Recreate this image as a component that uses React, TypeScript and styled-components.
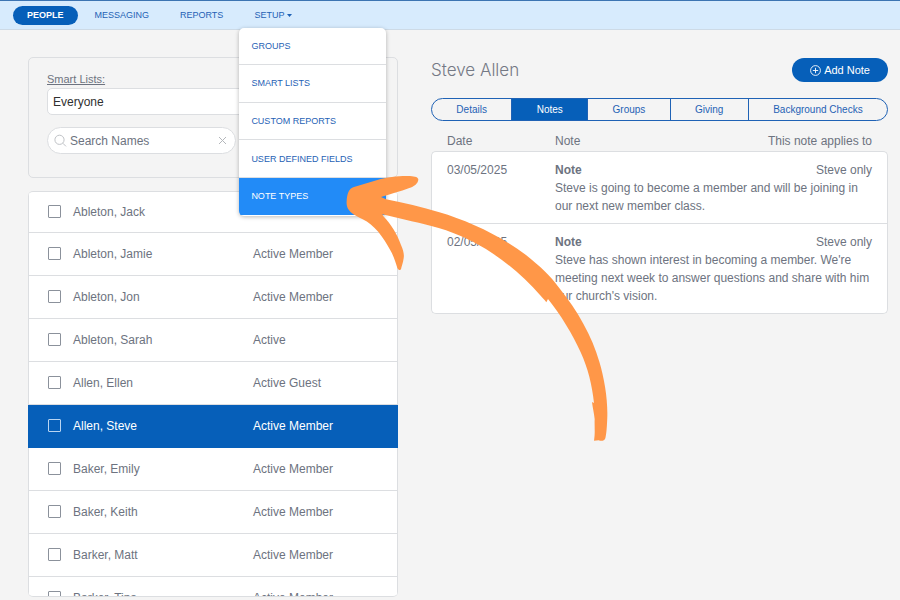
import React from "react";
import styled, { createGlobalStyle, css } from "styled-components";

const color = {
  blue: "#065fb9",
  link: "#1f62b5",
  highlight: "#228bf7",
  text: "#6d7380",
  line: "#dcdee1",
  page: "#f4f4f4",
  orange: "#ff9748",
};

const GlobalStyle = createGlobalStyle`
  *, *::before, *::after { box-sizing: border-box; }
  body {
    margin: 0;
    background: ${color.page};
    color: ${color.text};
    font-family: "Liberation Sans", Arial, sans-serif;
    font-size: 12px;
    line-height: 18px;
  }
  button, input, select { font: inherit; }
`;

const Page = styled.div`
  position: relative;
  display: flex;
  flex-direction: column;
  height: 100vh;
  overflow: hidden;
`;

const TopBar = styled.header`
  flex: none;
  background: #d7ebfd;
  border-top: 1px solid #3c74b2;
  border-bottom: 1px solid #cddae6;
`;

const Nav = styled.nav`
  display: flex;
  align-items: center;
  gap: 3px;
  height: 28px;
  padding-left: 13px;
  font-size: 9px;
`;

const navItem = css`
  display: flex;
  align-items: center;
  gap: 3px;
  height: 19px;
  padding: 0 14px;
  border: 0;
  border-radius: 10px;
  background: none;
  color: ${color.link};
  text-decoration: none;
  cursor: pointer;
`;

const NavLink = styled.a<{ $active?: boolean }>`
  ${navItem}
  ${(p) => p.$active && css`
    background: ${color.blue};
    color: #fff;
    font-weight: bold;
  `}
`;

const NavButton = styled.button`
  ${navItem}
`;

const MenuAnchor = styled.div`
  position: relative;
`;

const Menu = styled.div`
  position: absolute;
  z-index: 2;
  top: 22px;
  left: -1px;
  display: flex;
  flex-direction: column;
  width: 147px;
  height: 188px;
  overflow: hidden;
  border-radius: 5px;
  background: #fff;
  box-shadow: 0 1px 4px rgba(0, 0, 0, 0.28);
`;

const MenuItem = styled.a<{ $active?: boolean }>`
  display: flex;
  flex: 1;
  align-items: center;
  padding: 0 12px;
  border-bottom: 1px solid ${color.line};
  color: ${color.link};
  text-decoration: none;

  ${(p) => p.$active && css`
    border-color: ${color.highlight};
    background: ${color.highlight};
    color: #fff;
  `}
`;

const Content = styled.main`
  display: grid;
  flex: 1;
  grid-template-columns: 370fr 457fr;
  gap: 33px;
  min-height: 0;
  padding: 27px 12px 3px 28px;
`;

const People = styled.section`
  display: flex;
  flex-direction: column;
  gap: 13px;
  min-width: 0;
  min-height: 0;
`;

const Filters = styled.div`
  display: flex;
  flex: none;
  flex-direction: column;
  padding: 12px 18px 23px;
  border: 1px solid ${color.line};
  border-radius: 5px;
`;

const FilterLabel = styled.label`
  font-size: 11px;
  text-decoration: underline;
`;

const ListSelect = styled.select`
  height: 27px;
  padding: 0 5px;
  border: 1px solid ${color.line};
  border-radius: 5px;
  background: #fff;
  color: #303030;
  appearance: none;
`;

const SearchBox = styled.div`
  display: flex;
  align-items: center;
  gap: 3px;
  width: 57%;
  height: 27px;
  margin-top: 12px;
  padding: 0 8px 0 6px;
  border: 1px solid ${color.line};
  border-radius: 14px;
  background: #fff;
`;

const SearchInput = styled.input`
  flex: 1;
  min-width: 0;
  padding: 0;
  border: 0;
  outline: 0;
  background: none;

  &::placeholder { color: ${color.text}; opacity: 1; }
`;

const ClearButton = styled.button`
  display: flex;
  padding: 0;
  border: 0;
  background: none;
  cursor: pointer;
`;

const ListFrame = styled.div`
  flex: 1;
  min-height: 0;
  overflow: hidden;
  border-top: 1px solid ${color.line};
  border-bottom: 1px solid ${color.line};
  border-radius: 5px;
  background: #fff;
`;

const PeopleTable = styled.table`
  width: 100%;
  table-layout: fixed;
  border-spacing: 0;
`;

const PersonRow = styled.tr<{ $selected?: boolean }>`
  td {
    height: 43px;
    padding: 0;
    border-bottom: 1px solid ${color.line};
  }
  &:first-child td { height: 41px; }
  td:first-child { border-left: 1px solid ${color.line}; }
  td:last-child { border-right: 1px solid ${color.line}; }
  ${(p) => p.$selected && css`
    background: ${color.blue};
    color: #fff;
    && td { border-color: ${color.blue}; }
  `}
`;

const CheckCol = styled.col`
  width: 45px;
`;

const StatusCol = styled.col`
  width: 145px;
`;

const Check = styled.input`
  display: block;
  width: 13px;
  height: 13px;
  margin: 0 0 2px 19px;
  border: 1px solid #8b919b;
  border-radius: 1px;
  appearance: none;

  ${PersonRow}[aria-selected="true"] & { border-color: #b9d5f2; }
`;

const Detail = styled.section`
  min-width: 0;
  padding-top: 1px;
`;

const DetailHead = styled.div`
  display: flex;
  align-items: center;
  justify-content: space-between;
`;

const PersonName = styled.h1`
  margin: 0;
  font-family: Inter, "Liberation Sans", sans-serif;
  font-size: 17px;
  font-weight: 300;
  line-height: 24px;
  color: #747985;
`;

const AddButton = styled.button`
  display: flex;
  align-items: center;
  gap: 3px;
  height: 24px;
  padding: 0 18px;
  border: 0;
  border-radius: 12px;
  background: ${color.blue};
  color: #fff;
  font-size: 11px;
  cursor: pointer;
`;

const Tabs = styled.div`
  display: flex;
  height: 23px;
  margin-top: 16px;
  overflow: hidden;
  border: 1px solid ${color.link};
  border-radius: 12px;
`;

const Tab = styled.button<{ $active?: boolean }>`
  flex: 1 1 auto;
  padding: 0 24px;
  border: 0;
  border-left: 1px solid ${color.link};
  background: ${(p) => (p.$active ? color.blue : "none")};
  color: ${(p) => (p.$active ? "#fff" : color.link)};
  font-size: 10px;
  line-height: 12px;
  cursor: pointer;

  &:first-child { border-left: 0; }
`;

const NotesTable = styled.table`
  width: 100%;
  border-spacing: 0;

  th {
    padding: 11px 0 1px;
    font-weight: normal;
    text-align: left;
  }
  th:first-child { width: 124px; padding-left: 16px; }
  th:last-child { padding-right: 16px; text-align: right; }
`;

const NoteCell = styled.td`
  padding: 9px 0 0;
  background: #fff;
  vertical-align: top;
`;

const DateCell = styled(NoteCell)`
  padding-left: 15px;
  border-left: 1px solid ${color.line};
  border-bottom: 1px solid ${color.line};
`;

const TitleCell = styled(NoteCell)`
  font-weight: bold;
`;

const AppliesCell = styled(NoteCell)`
  padding-right: 15px;
  border-right: 1px solid ${color.line};
  text-align: right;
`;

const BodyCell = styled(NoteCell)`
  padding: 0 15px 8px 0;
  border-right: 1px solid ${color.line};
  border-bottom: 1px solid ${color.line};
`;

const NoteGroup = styled.tbody`
  &:nth-child(2) tr:first-child td { border-top: 1px solid ${color.line}; }
  &:nth-child(2) ${DateCell} { border-top-left-radius: 5px; }
  &:nth-child(2) ${AppliesCell} { border-top-right-radius: 5px; }
  &:last-child ${DateCell} { border-bottom-left-radius: 5px; }
  &:last-child ${BodyCell} { border-bottom-right-radius: 5px; }
`;

const ArrowDrawing = styled.svg`
  position: absolute;
  z-index: 3;
  top: 165px;
  left: 330px;
  width: 290px;
  height: 290px;
  pointer-events: none;
`;

const menuItems = ["GROUPS", "SMART LISTS", "CUSTOM REPORTS", "USER DEFINED FIELDS", "NOTE TYPES"];

const people = [
  ["Ableton, Jack", "Active Member"],
  ["Ableton, Jamie", "Active Member"],
  ["Ableton, Jon", "Active Member"],
  ["Ableton, Sarah", "Active"],
  ["Allen, Ellen", "Active Guest"],
  ["Allen, Steve", "Active Member"],
  ["Baker, Emily", "Active Member"],
  ["Baker, Keith", "Active Member"],
  ["Barker, Matt", "Active Member"],
  ["Barker, Tina", "Active Member"],
];

const tabs = ["Details", "Notes", "Groups", "Giving", "Background Checks"];

const notes = [
  {
    date: "03/05/2025",
    body: "Steve is going to become a member and will be joining in our next new member class.",
  },
  {
    date: "02/05/2025",
    body: "Steve has shown interest in becoming a member. We're meeting next week to answer questions and share with him our church's vision.",
  },
];

function Arrow() {
  return (
    <ArrowDrawing viewBox="0 0 870 870" aria-hidden="true">
      <path
        fill={color.orange}
        d="M50 108 C51 88 56 70 72 66 L152 42 C182 34 212 33 240 33 C256 34 265 37 265 44 C263 57 252 64 238 69 C210 79 184 87 153 96 L168 103 C220 113 276 126 328 142 C410 166 512 212 588 270 C628 302 661 332 686 367 C745 440 786 515 808 590 C823 640 833 700 832 752 C831 785 829 808 826 820 C823 828 814 829 806 826 L792 827 C796 803 793 785 794 762 C792 744 788 728 786 711 L792 714 C786 660 774 610 752 562 C728 508 691 448 654 402 L649 412 C643 402 637 399 632 392 C586 340 540 300 486 264 C438 232 386 207 326 189 C276 175 216 163 157 148 L160 154 C183 178 202 208 213 240 C220 256 223 268 221 280 C219 295 214 306 213 313 C210 317 205 315 202 309 C196 289 190 271 181 256 C161 218 132 178 98 163 C77 153 62 144 55 133 C51 126 49 118 50 108 Z"
      />
    </ArrowDrawing>
  );
}

export default function App() {
  return (
    <Page>
      <GlobalStyle />
      <TopBar>
        <Nav>
          <NavLink href="#people" $active>PEOPLE</NavLink>
          <NavLink href="#messaging">MESSAGING</NavLink>
          <NavLink href="#reports">REPORTS</NavLink>
          <MenuAnchor>
            <NavButton type="button" aria-expanded="true">
              SETUP
              <svg width="5" height="3" viewBox="0 0 5 3" aria-hidden="true">
                <path d="M0 0h5L2.5 3z" fill={color.link} />
              </svg>
            </NavButton>
            <Menu>
              {menuItems.map((item) => (
                <MenuItem key={item} href="#setup" $active={item === "NOTE TYPES"}>{item}</MenuItem>
              ))}
            </Menu>
          </MenuAnchor>
        </Nav>
      </TopBar>

      <Content>
        <People>
          <Filters>
            <FilterLabel htmlFor="smart-list">Smart Lists:</FilterLabel>
            <ListSelect id="smart-list">
              <option>Everyone</option>
            </ListSelect>
            <SearchBox>
              <svg width="13" height="13" viewBox="0 0 13 13" fill="none" stroke="#bfc2c6" aria-hidden="true">
                <circle cx="5.5" cy="5.8" r="4.6" />
                <path d="M8.8 9.2 12 12.4" />
              </svg>
              <SearchInput type="text" placeholder="Search Names" aria-label="Search Names" />
              <ClearButton type="button" aria-label="Clear search">
                <svg width="9" height="9" viewBox="0 0 9 9" stroke="#b4b7bb" aria-hidden="true">
                  <path d="M1 1l7 7M8 1 1 8" />
                </svg>
              </ClearButton>
            </SearchBox>
          </Filters>

          <ListFrame>
            <PeopleTable aria-label="People">
              <colgroup>
                <CheckCol />
                <col />
                <StatusCol />
              </colgroup>
              <tbody>
                {people.map(([name, status]) => {
                  const selected = name === "Allen, Steve";
                  return (
                    <PersonRow key={name} $selected={selected} aria-selected={selected}>
                      <td><Check type="checkbox" aria-label={name} /></td>
                      <td>{name}</td>
                      <td>{status}</td>
                    </PersonRow>
                  );
                })}
              </tbody>
            </PeopleTable>
          </ListFrame>
        </People>

        <Detail>
          <DetailHead>
            <PersonName>Steve Allen</PersonName>
            <AddButton type="button">
              <svg width="11" height="11" viewBox="0 0 11 11" fill="none" stroke="#fff" strokeWidth="0.9" aria-hidden="true">
                <circle cx="5.5" cy="5.5" r="4.9" />
                <path d="M5.5 2.8v5.4M2.8 5.5h5.4" />
              </svg>
              Add Note
            </AddButton>
          </DetailHead>

          <Tabs role="tablist">
            {tabs.map((tab) => (
              <Tab key={tab} type="button" role="tab" aria-selected={tab === "Notes"} $active={tab === "Notes"}>
                {tab}
              </Tab>
            ))}
          </Tabs>

          <NotesTable>
            <thead>
              <tr>
                <th scope="col">Date</th>
                <th scope="col">Note</th>
                <th scope="col">This note applies to</th>
              </tr>
            </thead>
            {notes.map((note) => (
              <NoteGroup key={note.date}>
                <tr>
                  <DateCell rowSpan={2}>{note.date}</DateCell>
                  <TitleCell>Note</TitleCell>
                  <AppliesCell>Steve only</AppliesCell>
                </tr>
                <tr>
                  <BodyCell colSpan={2}>{note.body}</BodyCell>
                </tr>
              </NoteGroup>
            ))}
          </NotesTable>
        </Detail>
      </Content>
      <Arrow />
    </Page>
  );
}
